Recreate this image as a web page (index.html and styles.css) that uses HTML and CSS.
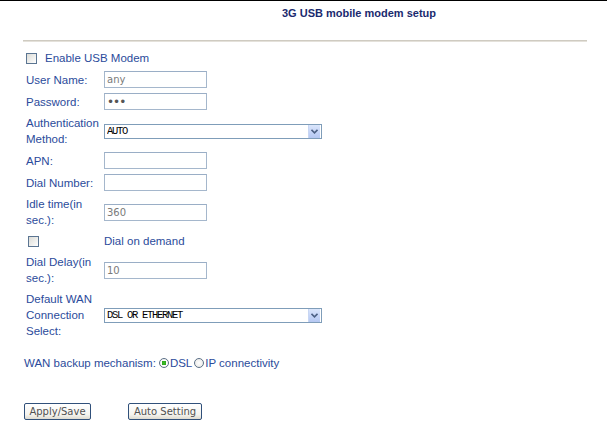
FILE: index.html
```html
<!DOCTYPE html>
<html>
<head>
<meta charset="utf-8">
<link rel="stylesheet" href="styles.css">
</head>
<body>
<div class="page">
  <div class="title">3G USB mobile modem setup</div>
  <div class="rule"></div>

  <div class="form">
    <div class="enable">
      <input type="checkbox" class="cb">
      <span class="lbl">Enable USB Modem</span>
    </div>

    <div class="lbl">User Name:</div>
    <div><input type="text" class="txt" value="any"></div>

    <div class="lbl">Password:</div>
    <div><input type="password" class="txt pw" value="abc"></div>

    <div class="lbl">Authentication<br>Method:</div>
    <div class="sel">
      <select class="sel-in"><option>AUTO</option></select>
      <span class="sel-btn"><svg width="7" height="5" viewBox="0 0 7 5"><path d="M0.5 0.8 L3.5 3.8 L6.5 0.8" fill="none" stroke="#4d6185" stroke-width="1.6"/></svg></span>
    </div>

    <div class="lbl">APN:</div>
    <div><input type="text" class="txt" value=""></div>

    <div class="lbl">Dial Number:</div>
    <div><input type="text" class="txt" value=""></div>

    <div class="lbl">Idle time(in<br>sec.):</div>
    <div><input type="text" class="txt" value="360"></div>

    <div class="cbcell"><input type="checkbox" class="cb"></div>
    <div class="lbl">Dial on demand</div>

    <div class="lbl">Dial Delay(in<br>sec.):</div>
    <div><input type="text" class="txt" value="10"></div>

    <div class="lbl">Default WAN<br>Connection<br>Select:</div>
    <div class="sel">
      <select class="sel-in"><option>DSL OR ETHERNET</option></select>
      <span class="sel-btn"><svg width="7" height="5" viewBox="0 0 7 5"><path d="M0.5 0.8 L3.5 3.8 L6.5 0.8" fill="none" stroke="#4d6185" stroke-width="1.6"/></svg></span>
    </div>
  </div>

  <div class="backup lbl">
    <span>WAN backup mechanism:</span>
    <input type="radio" name="bk" class="rd" checked><span>DSL</span>
    <input type="radio" name="bk" class="rd"><span>IP connectivity</span>
  </div>

  <div class="buttons">
    <button class="btn btn-apply">Apply/Save</button>
    <button class="btn btn-auto">Auto Setting</button>
  </div>
</div>
</body>
</html>
```

FILE: styles.css
```css
html, body {
  margin: 0;
  padding: 0;
  background: #ffffff;
}

.page {
  border-top: 1px solid #000000;
  width: 607px;
  height: 422px;
  font-family: "Liberation Sans", Arial, sans-serif;
  font-size: 11px;
}

.title {
  padding: 5px 0 0 282px;
  font-weight: bold;
  font-size: 11px;
  line-height: 14px;
  color: #1a2a6e;
}

.rule {
  margin: 20px 0 0 23px;
  width: 564px;
  height: 0;
  border-top: 1px solid #cfcbc1;
  border-bottom: 1px solid #e4e1da;
}

.form {
  margin: 8px 0 0 26px;
  display: grid;
  grid-template-columns: 78px auto;
  grid-template-rows: 16px 17px 17px 32px 17px 17px 32px 16px 32px 48px;
  row-gap: 5px;
  align-items: center;
}

.lbl {
  color: #2b4b9b;
  font-size: 11.5px;
  line-height: 16px;
}

.enable {
  grid-column: 1 / span 2;
  display: flex;
  align-items: center;
  gap: 8px;
}

.cb {
  appearance: none;
  -webkit-appearance: none;
  margin: 0;
  width: 11px;
  height: 11px;
  border: 1px solid #5b7592;
  background: linear-gradient(135deg, #dcdcd7 0%, #f4f4f2 70%, #ffffff 100%);
  box-sizing: border-box;
}

.cbcell {
  padding-left: 2px;
  display: flex;
  align-items: center;
}

.txt {
  margin: 0;
  box-sizing: border-box;
  width: 103px;
  height: 17px;
  border: 1px solid #a5b7cc;
  border-top-color: #9aaec6;
  padding: 0 2px;
  font-family: Tahoma, "DejaVu Sans", sans-serif;
  font-size: 10px;
  color: #7a7a7a;
  background: #ffffff;
  outline: none;
}

.pw {
  color: #555555;
  letter-spacing: -1px;
  font-size: 12px;
}

.sel {
  box-sizing: border-box;
  width: 218px;
  height: 15px;
  border: 1px solid #7f9db9;
  display: flex;
  align-items: stretch;
  background: #ffffff;
}

.sel-in {
  appearance: none;
  -webkit-appearance: none;
  flex: 1;
  border: none;
  margin: 0;
  padding: 0 0 0 2px;
  height: 13px;
  line-height: 13px;
  background: #ffffff;
  font-family: "Liberation Mono", "Courier New", monospace;
  font-size: 10.5px;
  font-weight: normal;
  letter-spacing: -1.3px;
  color: #000000;
  outline: none;
}

.sel-btn {
  width: 11px;
  margin: 0 1px 0 0;
  background: linear-gradient(180deg, #dbe6fb 0%, #c3d3f7 60%, #b6c8f2 100%);
  border-left: 1px solid #c8d6f3;
  display: flex;
  align-items: center;
  justify-content: center;
}

.backup {
  margin: 16px 0 0 24px;
  display: flex;
  align-items: center;
  gap: 0;
}

.backup span:first-child {
  margin-right: 3px;
}

.rd {
  appearance: none;
  -webkit-appearance: none;
  margin: 0 1px 0 0;
  width: 10px;
  height: 10px;
  border-radius: 50%;
  border: 1px solid #5b6f86;
  background: radial-gradient(circle, #ffffff 0%, #e6e6e2 100%);
  box-sizing: border-box;
}

.rd:checked {
  background: radial-gradient(circle, #3fbf2a 0%, #2ea81c 38%, #ffffff 42%, #ececea 100%);
}

.rd + span + .rd {
  margin-left: 2px;
}

.buttons {
  margin: 32px 0 0 24px;
  display: flex;
  gap: 37px;
}

.btn {
  box-sizing: border-box;
  height: 17px;
  padding: 0;
  border: 1px solid #30507a;
  border-radius: 2px;
  background: linear-gradient(180deg, #ffffff 0%, #f5f4ef 70%, #dedbd0 100%);
  font-family: Tahoma, "DejaVu Sans", sans-serif;
  font-size: 10px;
  color: #505050;
  line-height: 14px;
}

.btn-apply {
  width: 67px;
}

.btn-auto {
  width: 74px;
}
```
